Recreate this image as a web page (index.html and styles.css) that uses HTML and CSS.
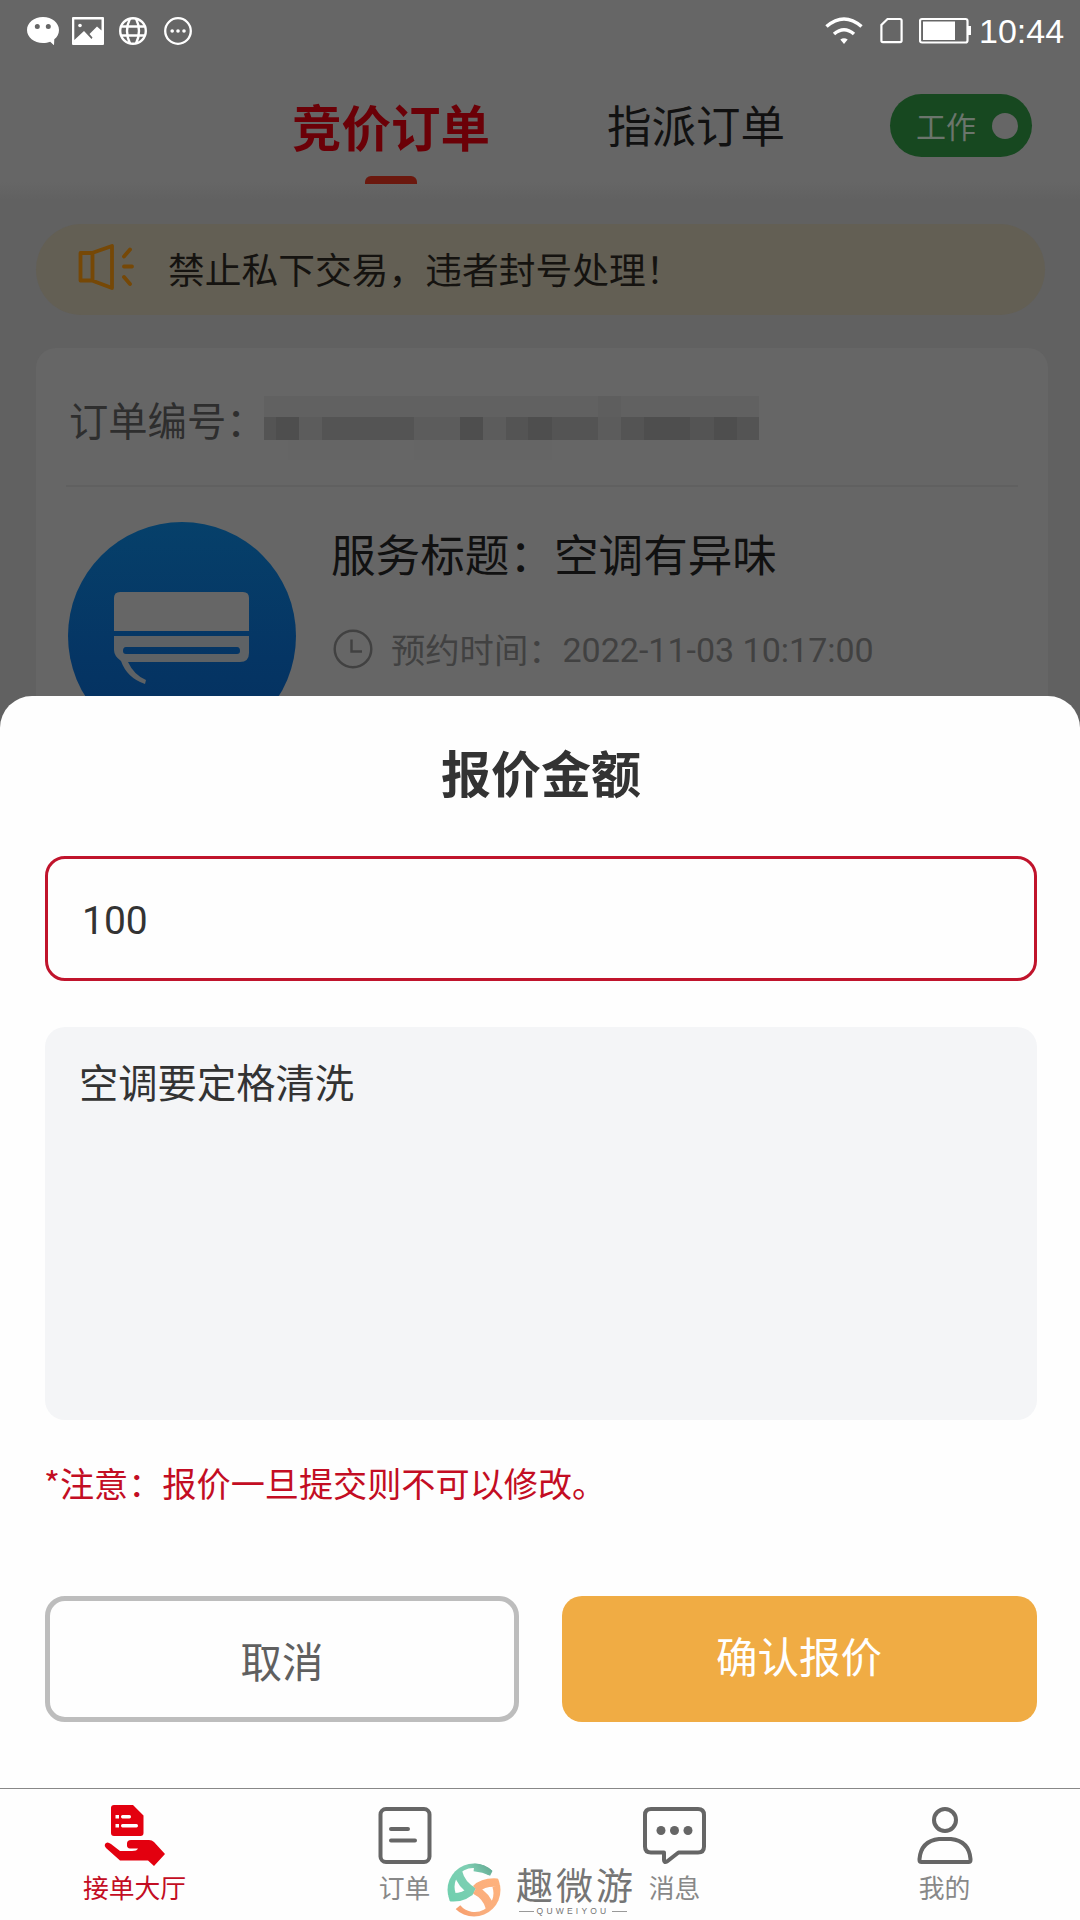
FILE: index.html
```html
<!DOCTYPE html>
<html lang="zh-CN">
<head>
<meta charset="utf-8">
<title>报价金额</title>
<link rel="stylesheet" href="styles.css">
</head>
<body>
<div class="screen">
  <header class="header">
    <div class="status">
      <div class="status-left">
        <svg width="32" height="28" viewBox="0 0 32 28"><path fill="#fff" fill-rule="evenodd" d="M16 0C7 0 0 5.800 0 13s7 13 16 13c2.700 0 5-.4 7.200-1.200L27 28.300l.3-6C30.300 20 32 16.600 32 13 32 5.800 25 0 16 0zM10.300 7a2.500 2.500 0 1 1 0 5 2.500 2.500 0 0 1 0-5zm11 0a2.500 2.500 0 1 1 0 5 2.500 2.500 0 0 1 0-5z"/></svg>
        <svg width="32" height="28" viewBox="0 0 32 28"><path fill="#fff" fill-rule="evenodd" d="M1 0h30a1 1 0 0 1 1 1v26a1 1 0 0 1-1 1H1a1 1 0 0 1-1-1V1a1 1 0 0 1 1-1zM2.300 2.500V23L12 14l7.500 8 1-1.500-3-3.500 7.500-7.500 4.500 4v-11z"/><circle cx="8" cy="8.500" r="1.800" fill="#fff"/></svg>
        <svg width="28" height="28" viewBox="0 0 28 28" fill="none" stroke="#fff" stroke-width="2.400"><circle cx="14" cy="14" r="12.800"/><path d="M11 1.500Q5 14 11 26.500M17 1.500Q23 14 17 26.500M3 9.500h22M3 18.500h22"/></svg>
        <svg width="28" height="28" viewBox="0 0 28 28"><circle cx="14" cy="14" r="12.800" fill="none" stroke="#fff" stroke-width="2.300"/><g fill="#fff"><circle cx="8.200" cy="14" r="1.800"/><circle cx="14" cy="14" r="1.800"/><circle cx="20" cy="14" r="1.800"/></g></svg>
      </div>
      <div class="status-right">
        <svg width="38" height="28" viewBox="0 0 38 28" fill="none" stroke="#fff" stroke-width="3.600"><path d="M1.500 9.500Q19-5.500 36.500 9.500M9 17Q19 8.500 29 17"/><path fill="#fff" stroke="none" d="M15.300 22.500Q19 20 22.700 22.500L19 27z"/></svg>
        <svg width="23" height="28" viewBox="0 0 23 28" fill="none" stroke="#fff" stroke-width="2.200"><path d="M7.500 2H20a1.600 1.600 0 0 1 1.600 1.600v20A1.600 1.600 0 0 1 20 25.200H3a1.600 1.600 0 0 1-1.600-1.600V8z"/></svg>
        <svg width="52" height="28" viewBox="0 0 52 28"><rect x="1" y="2" width="47.500" height="23.500" rx="2" fill="none" stroke="#fff" stroke-width="2.200"/><path fill="#fff" d="M4 4.500h32v18.500H4zM49 9h3v9h-3z"/></svg>
        <span class="clock">10:44</span>
      </div>
    </div>
    <nav class="tabs">
      <div class="tab tab-active">竞价订单<i class="tab-mark"></i></div>
      <div class="tab">指派订单</div>
      <div class="work-switch">工作<i class="knob"></i></div>
    </nav>
  </header>
  <main class="content">
    <div class="notice">
      <svg width="58" height="48" viewBox="0 0 58 48" fill="none" stroke="#764806" stroke-width="3.800" stroke-linejoin="round" stroke-linecap="round"><path d="M2.500 9H14L34 2v42L14 36.500H2.500zM14.500 9v27.500M46 12.500l6-7M46 22.500h8M46 33l6 7"/></svg>
      <span>禁止私下交易，违者封号处理！</span>
    </div>
    <section class="order">
      <div class="order-no">
        <span>订单编号：</span>
        <svg class="mosaic" width="496" height="66" viewBox="0 0 496 66" shape-rendering="crispEdges">
          <path fill="#616161" d="M0 0h495v21H0z"/><path fill="#5e5e5e" d="M334 0h23v21h-23z"/><path fill="#545454" d="M0 21h495v23H0z"/>
          <path fill="#4e4e4e" d="M12 21h23v23H12zM196 21h23v23h-23zM264 21h24v23h-24zM380 21h46v23h-46zM450 21h23v23h-23z"/>
          <path fill="#5c5c5c" d="M35 21h23v23H35zM150 21h46v23h-46zM219 21h23v23h-23zM334 21h23v23h-23z"/>
          <path fill="#656565" d="M24 44h92v20H24zM150 44h138v20H150z"/>
        </svg>
      </div>
      <div class="order-body">
        <svg class="service-icon" width="228" height="228" viewBox="0 0 228 228">
          <defs><linearGradient id="blue" x1="0" y1="0" x2="0" y2="1"><stop offset="0" stop-color="#06406a"/><stop offset=".6" stop-color="#053564"/><stop offset="1" stop-color="#05305f"/></linearGradient></defs>
          <circle cx="114" cy="114" r="114" fill="url(#blue)"/>
          <path fill="#666" d="M46 109V76q0-6 6-6h123q6 0 6 6v33z"/>
          <path fill="#5e6265" fill-rule="evenodd" d="M46 114h135v17q0 9-9 9H60q6 13 18 18l-1 4q-18-6-24-23-7-5-7-11zM58 125q-3 0-3 4 0 3 3 3h111q3 0 3-3 0-4-3-4z"/>
        </svg>
        <div class="order-info">
          <div class="order-title">服务标题：空调有异味</div>
          <div class="order-time">
            <svg width="40" height="40" viewBox="0 0 40 40" fill="none" stroke="#414141" stroke-width="2.400"><circle cx="20" cy="20" r="18.300"/><path d="M18.500 10.500v12H29"/></svg>
            <span class="time-label">预约时间：</span><span class="date">2022-11-03 10:17:00</span>
          </div>
        </div>
      </div>
    </section>
  </main>

  <div class="sheet">
    <h1 class="sheet-title">报价金额</h1>
    <div class="price">100</div>
    <div class="remark">空调要定格清洗</div>
    <p class="warning">*注意：报价一旦提交则不可以修改。</p>
    <div class="actions">
      <div class="btn btn-cancel">取消</div>
      <div class="btn btn-ok">确认报价</div>
    </div>
    <nav class="tabbar">
      <div class="item item-active">
        <svg width="70" height="64" viewBox="0 0 70 64"><path fill="#e3000f" fill-rule="evenodd" d="M14 0h19l10.500 10.500V28q0 3-3 3H14q-3 0-3-3V3q0-3 3-3zm1.500 10v3.500H19V10zm7 0q-1.500 0-1.500 1.750t1.500 1.750h7q1.500 0 1.500-1.750T29.500 10zm-7 9v3.500H19V19zm7 0q-1.500 0-1.500 1.750t1.500 1.750h14q1.500 0 1.500-1.750T36.500 19z"/><path fill="#e3000f" d="M5 39q2-3 6 0l9 7h12q5 0 6-2.500H30q-3-.5-3-3v-2q0-3.500 4-3.500h18q3 0 5 2L65 49 54 61l-6-5.500H20L6 43q-2-2-1-4z"/></svg>
        <span>接单大厅</span>
      </div>
      <div class="item">
        <svg width="64" height="64" viewBox="0 0 64 64" fill="none" stroke="#666" stroke-width="4" stroke-linecap="round"><rect x="7.500" y="4" width="49" height="53" rx="5.500"/><path d="M18 24h17M18 35.500h24"/></svg>
        <span>订单</span>
      </div>
      <div class="item">
        <svg width="64" height="64" viewBox="0 0 64 64" fill="none" stroke="#666" stroke-width="4" stroke-linejoin="round"><path d="M8 4h47q6 0 6 6v31.500q0 6-6 6H35.500L24 56.500q-3 1.500-3-1.500v-7.500H8q-6 0-6-6V10q0-6 6-6z"/><g fill="#666" stroke="none"><circle cx="18" cy="25.500" r="4.500"/><circle cx="31.500" cy="25.500" r="4.500"/><circle cx="45" cy="25.500" r="4.500"/></g></svg>
        <span>消息</span>
      </div>
      <div class="item">
        <svg width="64" height="64" viewBox="0 0 64 64" fill="none" stroke="#666" stroke-width="4" stroke-linejoin="round"><circle cx="32" cy="15" r="11"/><path d="M26 34h12q18 2 19.500 20v1q0 2-2 2h-47q-2 0-2-2v-1Q8 36 26 34z"/></svg>
        <span>我的</span>
      </div>
    </nav>
  </div>

  <div class="watermark">
    <svg width="54" height="54" viewBox="0 0 54 54" fill="none" stroke-width="8.500">
      <defs>
        <linearGradient id="wg" gradientUnits="userSpaceOnUse" x1="2" y1="40" x2="46" y2="4"><stop offset="0" stop-color="#6fcfae"/><stop offset=".65" stop-color="#7ecfb3"/><stop offset="1" stop-color="#63a791"/></linearGradient>
        <linearGradient id="wo" gradientUnits="userSpaceOnUse" x1="2" y1="40" x2="46" y2="4"><stop offset="0" stop-color="#ffb27c"/><stop offset=".65" stop-color="#f9ad7d"/><stop offset="1" stop-color="#f79c6a"/></linearGradient>
        <clipPath id="disc"><circle cx="27" cy="27" r="26.500"/></clipPath>
      </defs>
      <g clip-path="url(#disc)">
        <g stroke="url(#wg)"><path d="M4.500 31A23 23 0 0 1 44 9"/><path d="M1 34Q17 36 24 27"/><path d="M11 9Q14 22 27 29"/><path d="M27 4Q37 5 45 9"/></g>
        <g stroke="url(#wo)" transform="rotate(180 27 27)"><path d="M4.500 31A23 23 0 0 1 44 9"/><path d="M1 34Q17 36 25 28"/><path d="M11 9Q14 21 26 27"/></g>
      </g>
    </svg>
    <div class="brand">
      <span class="brand-name">趣微游</span>
      <span class="brand-sub"><i></i>QUWEIYOU<i></i></span>
    </div>
  </div>
</div>
</body>
</html>
```
FILE: styles.css
```css
* { box-sizing: border-box; }
body { margin: 0; font-family: "Noto Sans CJK SC", "Noto Sans", sans-serif; }
svg { display: block; flex: none; }
i { font-style: normal; }
.screen { position: relative; width: 1080px; height: 1920px; overflow: hidden; background: #616161; }

.header { height: 200px; background: linear-gradient(#666 0 182px, #616161 200px); }
.status { height: 62px; padding: 0 16px 0 27px; display: flex; justify-content: space-between; align-items: center; }
.status-left { display: flex; }
.status-left svg:nth-child(2) { margin-left: 13px; }
.status-left svg:nth-child(3) { margin-left: 15px; }
.status-left svg:nth-child(4) { margin-left: 17px; }
.status-right { display: flex; align-items: center; }
.status-right svg:nth-child(2) { margin-left: 17px; }
.status-right svg:nth-child(3) { margin-left: 16px; }
.clock { margin-left: 8px; width: 85px; font: 34px/40px "Liberation Sans", sans-serif; color: #fff; }

.tabs { height: 128px; padding: 32px 48px 0 292px; display: flex; }
.tab { position: relative; width: 200px; font-size: 44.500px; line-height: 60px; color: #111; }
.tab-active { width: 315px; font-size: 49.500px; line-height: 64px; font-weight: 700; color: #6b0007; }
.tab-mark { position: absolute; left: 73px; top: 82px; width: 52px; height: 8px; border-radius: 6px 6px 0 0; background: #6b180e; }
.work-switch { margin-left: auto; width: 142px; height: 63px; padding: 0 14px 2px 26px; border-radius: 32px; background: #174820; color: #6b756c; font-size: 30px; font-weight: 400; display: flex; align-items: center; justify-content: space-between; }
.knob { margin-top: 2px; width: 26px; height: 26px; border-radius: 50%; background: #666; }

.content { padding: 24px 32px 0 36px; }
.notice { height: 91px; margin-right: 3px; padding: 0 42px 4px; border-radius: 46px; background: #635f54; display: flex; align-items: center; gap: 32px; color: #151310; font-size: 36.750px; line-height: 54px; }
.order { margin-top: 33px; padding: 0 30px; height: 500px; border-radius: 20px; background: #666; color: #111; }
.order-no { height: 139px; padding: 0 0 0 3px; border-bottom: 2px solid #606060; display: flex; align-items: center; color: #2e2e2e; font-size: 39.300px; }
.order-no span { padding-top: 4px; }
.mosaic { margin-top: 24px; margin-left: -1px; }
.order-body { padding: 35px 0 0 2px; display: flex; }
.order-info { padding-left: 35px; }
.order-title { margin-top: 1px; line-height: 60px; font-size: 44.600px; }
.order-time { margin-top: 46px; height: 40px; display: flex; align-items: center; color: #414141; font-size: 34.300px; }
.order-time svg { margin-right: 18px; margin-left: 2px; }
.time-label { margin-top: -2px; }
.date { margin-top: 2px; font-family: Roboto, sans-serif; font-size: 34px; }

.sheet { position: absolute; left: 0; top: 696px; width: 1080px; height: 1224px; padding: 45px 43px 0 45px; border-radius: 32px 32px 0 0; background: #fefefe; color: #333; display: flex; flex-direction: column; }
.sheet-title { margin: 0; height: 60px; line-height: 60px; font-size: 50px; font-weight: 700; text-align: center; }
.price { margin-top: 55px; height: 125px; padding-left: 34px; border: 3px solid #c0142c; border-radius: 20px; font: 39px/124px Roboto, sans-serif; }
.remark { margin-top: 46px; height: 393px; padding: 25px 34px; border-radius: 20px; background: #f4f5f7; font-size: 39.300px; line-height: 58px; }
.warning { margin: 38px 0 0 -1px; line-height: 48px; font-size: 34.150px; color: #c30d23; }
.actions { margin-top: 90px; display: grid; grid-template-columns: 474px 475px; gap: 43px; }
.btn { height: 126px; border-radius: 20px; text-align: center; font-size: 41.500px; }
.btn-cancel { border: 5px solid #bdbdbd; line-height: 118px; color: #606060; }
.btn-ok { padding-right: 1px; background: #f0ac44; line-height: 118px; color: #fff; }
.tabbar { margin: auto -43px 0 -45px; height: 132px; border-top: 1px solid #888; display: grid; grid-template-columns: repeat(4, 1fr); }
.item { padding: 16px 1px 0 0; display: flex; flex-direction: column; align-items: center; font-size: 25.800px; line-height: 34px; color: #888; }
.item span { margin-top: 1px; }
.item-active { color: #c30d23; }

.watermark { position: absolute; left: 447px; top: 1863px; display: flex; gap: 15px; }
.brand { width: 118px; color: #757575; display: flex; flex-direction: column; }
.brand-name { height: 42px; line-height: 42px; font-size: 37px; letter-spacing: 3px; white-space: nowrap; }
.brand-sub { margin: 1px 0 0 3px; width: 108px; display: flex; align-items: center; justify-content: space-between; font: 8.500px/10px "Liberation Sans", sans-serif; letter-spacing: 3.200px; }
.brand-sub i { width: 15px; height: 1px; background: #999; }
```
